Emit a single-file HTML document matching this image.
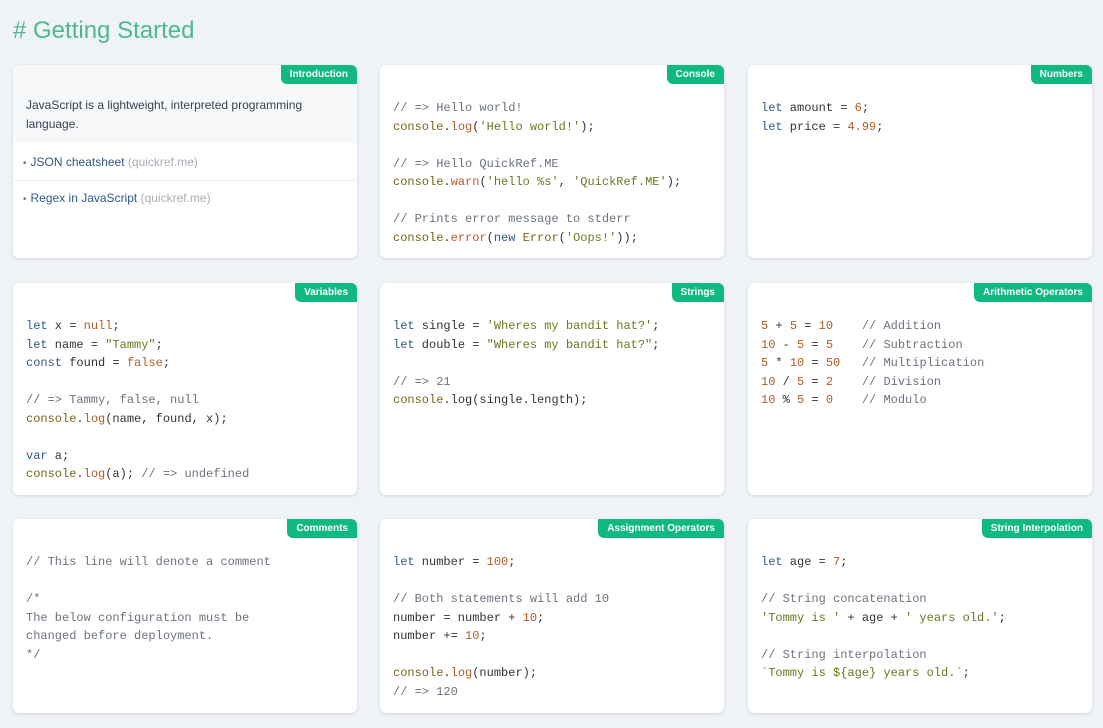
<!DOCTYPE html>
<html><head><meta charset="utf-8"><style>
*{box-sizing:border-box;margin:0;padding:0}
body{width:1103px;height:728px;background:#eff2f6;font-family:"Liberation Sans",sans-serif;position:relative;overflow:hidden}
h1{position:absolute;left:13px;top:17px;font-size:24px;font-weight:normal;color:#4dba8c;letter-spacing:0}
.card{position:absolute;width:344px;background:#fff;border-radius:6px;box-shadow:0 1px 3px rgba(0,0,0,.12);overflow:hidden}
.tag{position:absolute;right:0;top:0;background:#10b981;color:#fff;font-size:10px;font-weight:bold;padding:0 9px;height:19px;line-height:19px;border-radius:0 0 0 6px}
pre{font-family:"Liberation Mono",monospace;font-size:12px;line-height:18.5px;color:#333;padding:34px 13px 0 13px}
.k{color:#2e5a8a}.s{color:#6a7a1e}.n{color:#b25c25}.c{color:#6b7280}.f{color:#7a6418}.m{color:#b25c25}
.intro{background:#f6f8fa;padding:31px 13px 9px;font-size:12px;line-height:19px;color:#374151}
.li{font-size:12px;color:#2f5789;padding:9px 8px 9px 10px;height:35px;line-height:17px}
.li+.li{border-top:1px solid #edf0f3}
.li span{color:#a8adb4}
.li:before{content:"•";color:#777;margin-right:4px;font-size:10px}
</style></head><body>
<h1># Getting Started</h1>

<div class="card" style="left:13px;top:65px;height:193px">
<div class="tag">Introduction</div>
<div class="intro">JavaScript is a lightweight, interpreted programming language.</div>
<div class="li" style="margin-top:2px">JSON cheatsheet <span>(quickref.me)</span></div>
<div class="li">Regex in JavaScript <span>(quickref.me)</span></div>
</div>

<div class="card" style="left:380px;top:65px;height:193px">
<div class="tag">Console</div>
<pre><span class="c">// =&gt; Hello world!</span>
<span class="f">console</span>.<span class="m">log</span>(<span class="s">'Hello world!'</span>);

<span class="c">// =&gt; Hello QuickRef.ME</span>
<span class="f">console</span>.<span class="m">warn</span>(<span class="s">'hello %s'</span>, <span class="s">'QuickRef.ME'</span>);

<span class="c">// Prints error message to stderr</span>
<span class="f">console</span>.<span class="m">error</span>(<span class="k">new</span> <span class="f">Error</span>(<span class="s">'Oops!'</span>));</pre>
</div>

<div class="card" style="left:748px;top:65px;height:193px">
<div class="tag">Numbers</div>
<pre><span class="k">let</span> amount = <span class="n">6</span>;
<span class="k">let</span> price = <span class="n">4.99</span>;</pre>
</div>

<div class="card" style="left:13px;top:283px;height:212px">
<div class="tag">Variables</div>
<pre><span class="k">let</span> x = <span class="n">null</span>;
<span class="k">let</span> name = <span class="s">"Tammy"</span>;
<span class="k">const</span> found = <span class="n">false</span>;

<span class="c">// =&gt; Tammy, false, null</span>
<span class="f">console</span>.<span class="m">log</span>(name, found, x);

<span class="k">var</span> a;
<span class="f">console</span>.<span class="m">log</span>(a); <span class="c">// =&gt; undefined</span></pre>
</div>

<div class="card" style="left:380px;top:283px;height:212px">
<div class="tag">Strings</div>
<pre><span class="k">let</span> single = <span class="s">'Wheres my bandit hat?'</span>;
<span class="k">let</span> double = <span class="s">"Wheres my bandit hat?"</span>;

<span class="c">// =&gt; 21</span>
<span class="f">console</span>.log(single.length);</pre>
</div>

<div class="card" style="left:748px;top:283px;height:212px">
<div class="tag">Arithmetic Operators</div>
<pre><span class="n">5</span> + <span class="n">5</span> = <span class="n">10</span>    <span class="c">// Addition</span>
<span class="n">10</span> - <span class="n">5</span> = <span class="n">5</span>    <span class="c">// Subtraction</span>
<span class="n">5</span> * <span class="n">10</span> = <span class="n">50</span>   <span class="c">// Multiplication</span>
<span class="n">10</span> / <span class="n">5</span> = <span class="n">2</span>    <span class="c">// Division</span>
<span class="n">10</span> % <span class="n">5</span> = <span class="n">0</span>    <span class="c">// Modulo</span></pre>
</div>

<div class="card" style="left:13px;top:519px;height:194px">
<div class="tag">Comments</div>
<pre><span class="c">// This line will denote a comment

/*
The below configuration must be
changed before deployment.
*/</span></pre>
</div>

<div class="card" style="left:380px;top:519px;height:194px">
<div class="tag">Assignment Operators</div>
<pre><span class="k">let</span> number = <span class="n">100</span>;

<span class="c">// Both statements will add 10</span>
number = number + <span class="n">10</span>;
number += <span class="n">10</span>;

<span class="f">console</span>.<span class="m">log</span>(number);
<span class="c">// =&gt; 120</span></pre>
</div>

<div class="card" style="left:748px;top:519px;height:194px">
<div class="tag">String Interpolation</div>
<pre><span class="k">let</span> age = <span class="n">7</span>;

<span class="c">// String concatenation</span>
<span class="s">'Tommy is '</span> + age + <span class="s">' years old.'</span>;

<span class="c">// String interpolation</span>
<span class="s">`Tommy is ${age} years old.`</span>;</pre>
</div>
</body></html>
